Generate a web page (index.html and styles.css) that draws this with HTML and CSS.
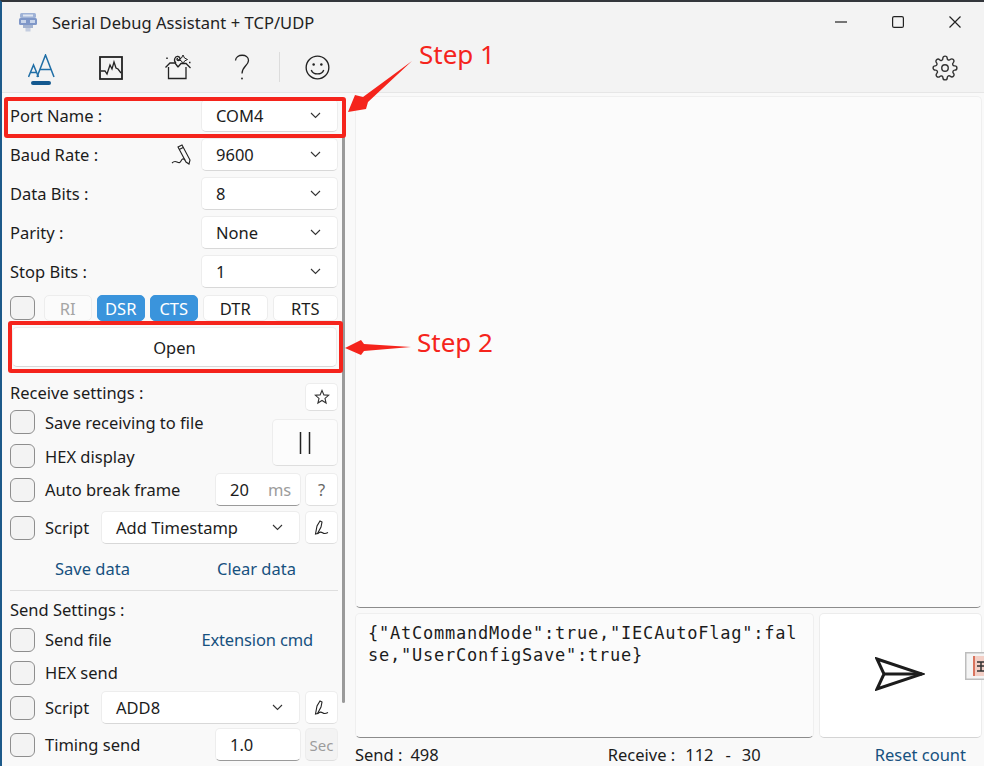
FILE: index.html
```html
<!DOCTYPE html>
<html lang="en">
<head>
<meta charset="utf-8">
<title>Serial Debug Assistant + TCP/UDP</title>
<link rel="stylesheet" href="styles.css">
</head>
<body>
<div class="window">
  <header class="titlebar">
    <svg class="app-icon" width="20" height="20" viewBox="0 0 20 20"><rect x="2" y="1" width="16" height="5" rx="1.5" fill="#9fb2d6"/><rect x="5" y="2.5" width="10" height="2" fill="#dfe6f2"/><rect x="1" y="6" width="18" height="7" rx="1.5" fill="#7f97c8"/><rect x="3" y="8" width="5" height="3" fill="#c9d5ea"/><rect x="12" y="8" width="5" height="3" fill="#c9d5ea"/><rect x="5" y="13" width="10" height="3" fill="#a3b2cf"/><rect x="7.5" y="16" width="5" height="3.5" fill="#c4cde0"/></svg>
    <span class="title">Serial Debug Assistant + TCP/UDP</span>
    <div class="win-controls">
      <svg class="wc-min" width="12" height="12" viewBox="0 0 12 12"><path d="M0 6h12" stroke="#222" stroke-width="1.2"/></svg>
      <svg class="wc-max" width="12" height="12" viewBox="0 0 12 12"><rect x=".6" y=".6" width="10.8" height="10.8" rx="1.5" fill="none" stroke="#222" stroke-width="1.2"/></svg>
      <svg class="wc-close" width="12" height="12" viewBox="0 0 12 12"><path d="M.5.5l11 11M11.500.5l-11 11" stroke="#222" stroke-width="1.2"/></svg>
    </div>
  </header>
  <nav class="toolbar">
    <svg class="tb-aa" width="28" height="32" viewBox="0 0 28 32" fill="none" stroke="#1f6ea6" stroke-width="1.5"><path d="M.5 23L5.500 11 10.500 23M2.300 18.500h6.500"/><path d="M9 23L17.500 1 26 23M12 15.500h11"/><rect x="3" y="27" width="20" height="4" rx="2" fill="#14598f" stroke="none"/></svg>
    <svg class="tb-chart" width="24" height="24" viewBox="0 0 24 24" fill="none" stroke="#222"><rect x="1" y="1" width="22" height="22" stroke-width="1.800"/><path d="M2 15h4l2 3 3-9 2 4 2-7 2 6 2 1 3 4" stroke-width="1.300"/></svg>
    <svg class="tb-gift" width="26" height="26" viewBox="0 0 26 26" fill="none" stroke="#222" stroke-width="1.300"><path d="M3.500 13v11.500h17.500V13"/><path d="M.5 13.500L5 9h5M13 13l-3-4M25.500 14L21 9.500h-5L13 13"/><path d="M11 9c-3-2.500-1-7 2-6.500s2.500 4 .5 4-2-2-.5-2"/><path d="M18 1l1.500 3L22.500 5.500 19.500 7 18 10l-1.500-3L13.500 5.500 16.500 4z" stroke-width="1"/><path d="M2 3.500v1.500M24 8.500h1.500" stroke-width="1.500"/></svg>
    <svg class="tb-help" width="16" height="26" viewBox="0 0 16 26" fill="none" stroke="#222" stroke-width="1.300"><path d="M1.500 6.500C2 -.5 14.500 -.5 14.500 6.500c0 5-6.500 6-6.500 13"/><circle cx="8" cy="24.500" r=".9" fill="#222" stroke="none"/></svg>
    <span class="tb-sep"></span>
    <svg class="tb-smile" width="25" height="25" viewBox="0 0 26 26" fill="none" stroke="#222" stroke-width="1.400"><circle cx="13" cy="13" r="11.800"/><circle cx="9" cy="10" r="1.300" fill="#222" stroke="none"/><circle cx="17" cy="10" r="1.300" fill="#222" stroke="none"/><path d="M6.500 15.500c2 5.500 11 5.500 13 0"/></svg>
    <svg class="tb-gear" width="26" height="26" viewBox="0 0 24 24" fill="none" stroke="#333" stroke-width="1.300" stroke-linecap="round" stroke-linejoin="round"><circle cx="12" cy="12" r="3"/><path d="M19.400 15a1.650 1.650 0 0 0 .33 1.820l.06.06a2 2 0 1 1-2.830 2.830l-.06-.06a1.650 1.650 0 0 0-2.800 1.170V21a2 2 0 1 1-4 0v-.09A1.650 1.650 0 0 0 7.300 19.740l-.06.06a2 2 0 1 1-2.830-2.830l.06-.06A1.650 1.650 0 0 0 3.300 14H3a2 2 0 1 1 0-4h.09A1.650 1.650 0 0 0 4.260 7.300l-.06-.06a2 2 0 1 1 2.830-2.830l.06.06A1.650 1.650 0 0 0 10 3.300V3a2 2 0 1 1 4 0v.09a1.650 1.650 0 0 0 2.800 1.170l.06-.06a2 2 0 1 1 2.830 2.830l-.06.06A1.650 1.650 0 0 0 20.700 10H21a2 2 0 1 1 0 4h-.09a1.650 1.650 0 0 0-1.510 1z"/></svg>
  </nav>
  <div class="content">
    <aside class="side">
      <div class="row r39"><span class="lbl">Port Name :</span><div class="select s-port"><span>COM4</span><svg class="chev" width="11" height="7" viewBox="0 0 11 7"><path d="M1 1l4.500 4.500L10 1" fill="none" stroke="#333" stroke-width="1.100"/></svg></div></div>
      <div class="row r39"><span class="lbl">Baud Rate :</span>
        <svg class="baud-pen" width="20" height="21" viewBox="0 0 20 21" fill="none" stroke="#222" stroke-width="1.100"><path d="M7 3l4-2 8 15-1 4-3-2z"/><path d="M8.200 5.500l4-2"/><path d="M1 19c2-2 3-2 5-1s3 1 4-1 2-3 4-1"/></svg>
        <div class="select s-port"><span>9600</span><svg class="chev" width="11" height="7" viewBox="0 0 11 7"><path d="M1 1l4.500 4.500L10 1" fill="none" stroke="#333" stroke-width="1.100"/></svg></div></div>
      <div class="row r39"><span class="lbl">Data Bits :</span><div class="select s-port"><span>8</span><svg class="chev" width="11" height="7" viewBox="0 0 11 7"><path d="M1 1l4.500 4.500L10 1" fill="none" stroke="#333" stroke-width="1.100"/></svg></div></div>
      <div class="row r39"><span class="lbl">Parity :</span><div class="select s-port"><span>None</span><svg class="chev" width="11" height="7" viewBox="0 0 11 7"><path d="M1 1l4.500 4.500L10 1" fill="none" stroke="#333" stroke-width="1.100"/></svg></div></div>
      <div class="row r39"><span class="lbl">Stop Bits :</span><div class="select s-port"><span>1</span><svg class="chev" width="11" height="7" viewBox="0 0 11 7"><path d="M1 1l4.500 4.500L10 1" fill="none" stroke="#333" stroke-width="1.100"/></svg></div></div>

      <div class="signals">
        <span class="check"></span>
        <span class="sig sig-s sig-off sig-first">RI</span>
        <span class="sig sig-s sig-on">DSR</span>
        <span class="sig sig-s sig-on">CTS</span>
        <span class="sig sig-l">DTR</span>
        <span class="sig sig-l">RTS</span>
      </div>
      <button class="open">Open</button>

      <div class="recv-top">
        <div class="recv-left">
          <div class="head">Receive settings :</div>
          <div class="row r34"><span class="check"></span><span class="ck-lbl">Save receiving to file</span></div>
          <div class="row r34"><span class="check"></span><span class="ck-lbl">HEX display</span></div>
        </div>
        <div class="recv-right">
          <button class="btn star-btn"><svg width="16" height="16" viewBox="0 0 16 16"><path d="M8 1.500l1.900 4.400 4.700.4-3.600 3.100 1.100 4.600L8 11.500 3.900 14l1.100-4.600-3.600-3.100 4.700-.4z" fill="none" stroke="#333" stroke-width="1.100"/></svg></button>
          <button class="btn pause-btn"><svg width="12" height="22" viewBox="0 0 12 22"><path d="M1.500 0v22M10.500 0v22" stroke="#222" stroke-width="1.500"/></svg></button>
        </div>
      </div>

      <div class="row r33"><span class="check"></span><span class="ck-lbl">Auto break frame</span>
        <div class="input i-push"><span class="i-val">20</span><span class="i-unit">ms</span></div>
        <button class="btn tool q">?</button></div>
      <div class="row r33 mt5"><span class="check"></span><span class="ck-lbl">Script</span>
        <div class="select s-script"><span>Add Timestamp</span><svg class="chev" width="11" height="7" viewBox="0 0 11 7"><path d="M1 1l4.500 4.500L10 1" fill="none" stroke="#333" stroke-width="1.100"/></svg></div>
        <button class="btn tool"><svg width="16" height="16" viewBox="0 0 16 16" fill="none" stroke="#222" stroke-width="1.100"><path d="M1.500 14L3 6l3-5 2 1-1 5-3.500 6.500z"/><path d="M3.500 14c2-3 4-2 5.500-1s3 .5 5-.5"/></svg></button></div>

      <div class="links"><span class="link link-save">Save data</span><span class="link link-clear">Clear data</span></div>
      <hr class="rule">
      <div class="head send-head">Send Settings :</div>
      <div class="row r33"><span class="check"></span><span class="ck-lbl">Send file</span><span class="link link-ext">Extension cmd</span></div>
      <div class="row r33"><span class="check"></span><span class="ck-lbl">HEX send</span></div>
      <div class="row r33 mt2"><span class="check"></span><span class="ck-lbl">Script</span>
        <div class="select s-script"><span>ADD8</span><svg class="chev" width="11" height="7" viewBox="0 0 11 7"><path d="M1 1l4.500 4.500L10 1" fill="none" stroke="#333" stroke-width="1.100"/></svg></div>
        <button class="btn tool"><svg width="16" height="16" viewBox="0 0 16 16" fill="none" stroke="#222" stroke-width="1.100"><path d="M1.500 14L3 6l3-5 2 1-1 5-3.500 6.500z"/><path d="M3.500 14c2-3 4-2 5.500-1s3 .5 5-.5"/></svg></button></div>
      <div class="row r33 mt4"><span class="check"></span><span class="ck-lbl">Timing send</span>
        <div class="input i-push"><span class="i-val">1.0</span></div>
        <button class="btn tool sec">Sec</button></div>
      <span class="scrollbar"></span>
    </aside>
    <main class="main">
      <section class="recv-box"></section>
      <section class="send-row">
        <div class="send-box">{"AtCommandMode":true,"IECAutoFlag":false,"UserConfigSave":true}</div>
        <button class="send-btn"><svg width="50" height="34" viewBox="0 0 50 34"><path d="M2 2l45 15L2 32l7-15z" fill="none" stroke="#1c1c1c" stroke-width="3" stroke-linejoin="miter"/><path d="M9 17h38" stroke="#1c1c1c" stroke-width="3"/></svg></button>
      </section>
      <footer class="status">
        <span class="st-send">Send :</span><span class="st-sval">498</span>
        <span class="st-recv">Receive :</span><span class="st-rval">112</span><span class="st-dash">-</span><span class="st-rval2">30</span>
        <span class="link st-reset">Reset count</span>
      </footer>
    </main>
  </div>

  <span class="mark mark-1"></span>
  <span class="mark mark-2"></span>
  <span class="step step-1">Step 1</span>
  <span class="step step-2">Step 2</span>
  <svg class="arrow arrow-1" width="70" height="56" viewBox="0 0 70 56"><path d="M68 4L19 40 11 38 4 55 22 52 24 45z" fill="#f5241c"/></svg>
  <svg class="arrow arrow-2" width="68" height="18" viewBox="0 0 68 18"><path d="M67 8L20 5 17 1 1 9 17 16 20 12z" fill="#f5241c"/></svg>
  <svg class="float-icon" width="20" height="28" viewBox="0 0 20 28"><rect x=".75" y=".75" width="19.500" height="26.500" fill="#f4f4f4" stroke="#bdbdbd" stroke-width="1.500"/><rect x="8" y="4" width="12" height="20" fill="#f3cfc6"/><rect x="8" y="4" width="2" height="20" fill="#d9745e"/><path d="M12 10h8M12 14h8M12 19h8M16 10v9" stroke="#333" stroke-width="1.500"/></svg>
</div>
</body>
</html>
```

FILE: styles.css
```css
* { box-sizing: border-box; }
html, body { margin: 0; padding: 0; height: 100%; overflow: hidden; background: #f3f3f3; }
body { font-family: "Noto Sans", "Open Sans", sans-serif; font-size: 16.5px; color: #1c1c1c; }
button { font: inherit; color: inherit; padding: 0; cursor: default; }

.window {
  position: relative;
  width: 984px; height: 766px;
  border-top: 2px solid #33363b;
  border-left: 2px solid #1d5a8a;
  background: #f3f3f3;
  display: flex; flex-direction: column;
  overflow: hidden;
}

.titlebar { height: 40px; display: flex; align-items: center; padding-left: 16px; flex: none; }
.app-icon { flex: none; }
.title { margin-left: 14px; font-size: 16.500px; color: #222; letter-spacing: .05px; }
.win-controls { margin-left: auto; display: flex; align-items: center; padding-right: 23px; }
.wc-min { margin-right: 45px; }
.wc-max { margin-right: 45px; }

.toolbar { height: 50px; flex: none; display: flex; align-items: center; }
.tb-aa { margin-left: 26px; margin-top: 6px; }
.tb-chart { margin-left: 43px; margin-top: 2px; }
.tb-gift { margin-left: 42px; }
.tb-help { margin-left: 43px; }
.tb-sep { width: 1px; height: 30px; background: #dcdcdc; margin-left: 29px; }
.tb-smile { margin-left: 25px; }
.tb-gear { margin-left: auto; margin-right: 26px; margin-top: 2px; }

.content { flex: 1; min-height: 0; display: flex; background: #f9f9f9; border-top: 1px solid #e6e6e6; }

.side { position: relative; width: 343px; flex: none; padding: 3px 7px 0 8px; }
.row { display: flex; align-items: center; }
.r39 { height: 39px; }
.r34 { height: 34px; }
.r33 { height: 33px; }
.mt2 { margin-top: 2px; }
.mt4 { margin-top: 4px; }
.mt5 { margin-top: 5px; }

.select {
  height: 33px; background: #fff;
  border: 1px solid #ededed; border-bottom-color: #d8d8d8; border-radius: 5px;
  display: flex; align-items: center; justify-content: space-between;
  padding: 0 16px 0 14px;
}
.s-port { width: 137px; margin-left: auto; }
.s-script { width: 199px; margin-left: auto; }
.baud-pen { margin-left: auto; }
.baud-pen + .s-port { margin-left: 10px; }

.check {
  width: 25px; height: 24px; flex: none;
  border: 1.500px solid #8e8e8e; border-radius: 6px; background: #f3f3f3;
}
.ck-lbl { margin-left: 10px; white-space: nowrap; }

.signals { display: flex; align-items: center; gap: 4.500px; margin-top: 4px; height: 26px; }
.sig {
  height: 26px; display: flex; align-items: center; justify-content: center;
  background: #fff; border: 1px solid #ededed; border-radius: 5px;
}
.sig-s { width: 48.500px; }
.sig-l { width: 65.500px; }
.sig-first { margin-left: 4px; }
.sig-off { color: #a5a5a5; background: #fbfbfb; }
.sig-on { background: #3a94dc; border-color: #3a94dc; color: #fff; }

.open {
  display: block; width: 325px; height: 40px; margin: 6px 0 0 2px;
  background: #fff; border: 1px solid #ededed; border-bottom-color: #d8d8d8; border-radius: 5px;
}

.recv-top { display: flex; justify-content: space-between; margin-top: 16px; height: 90px; }
.head { height: 22px; line-height: 20px; }
.recv-right { display: flex; flex-direction: column; align-items: flex-end; gap: 8px; }

.btn {
  background: #fff; border: 1px solid #ededed; border-bottom-color: #dedede; border-radius: 5px;
  display: flex; align-items: center; justify-content: center;
}
.star-btn { width: 33px; height: 28px; }
.pause-btn { width: 66px; height: 47px; background: #fcfcfc; }
.tool { width: 33px; height: 33px; margin-left: 5px; flex: none; }
.q { color: #666; margin-left: 4px; }
.sec { color: #9c9c9c; font-size: 15px; background: #f3f3f3; margin-left: 4px; }

.input {
  width: 86px; height: 33px; background: #fff; flex: none;
  border: 1px solid #ededed; border-bottom-color: #9a9a9a; border-radius: 5px;
  display: flex; align-items: center; padding-left: 14px;
}
.i-push { margin-left: auto; }
.i-unit { color: #9c9c9c; margin-left: 19px; }

.link { color: #17517f; white-space: nowrap; }
.links { display: flex; height: 24px; align-items: center; margin-top: 12px; }
.link-save { margin-left: 45px; }
.link-clear { margin-left: auto; margin-right: 42px; }
.rule { border: 0; height: 1px; background: #dedede; margin: 10px 0 0 0; }
.send-head { margin-top: 8px; height: 24px; line-height: 22px; }
.link-ext { margin-left: auto; margin-right: 25px; letter-spacing: -.15px; }

.scrollbar {
  position: absolute; left: 340px; top: 8px; width: 3px; height: 602px;
  background: #9a9a9a; border-radius: 2px;
}

.main { flex: 1; min-width: 0; display: flex; flex-direction: column; padding: 3px 2px 0 10px; }
.recv-box {
  flex: 1; min-height: 0; background: #fbfbfb;
  border: 1px solid #efefef; border-bottom-color: #8c8c8c; border-radius: 5px;
}
.send-row { display: flex; gap: 5px; height: 125px; margin-top: 5px; flex: none; }
.send-box {
  width: 459px; background: #fbfbfb;
  border: 1px solid #efefef; border-bottom-color: #8c8c8c; border-radius: 5px;
  padding: 8px 12px;
  font-family: "DejaVu Sans Mono", "Liberation Mono", monospace; font-size: 17px; line-height: 22px;
  letter-spacing: .77px; color: #1c1c1c;
  word-break: break-all;
}
.send-btn {
  flex: 1; background: #fff;
  border: 1px solid #ececec; border-bottom-color: #d4d4d4; border-radius: 5px;
  display: flex; align-items: center; justify-content: center;
  padding: 0 2px 4px 0;
}
.status { display: flex; align-items: center; height: 28px; flex: none; padding-top: 5px; }
.st-sval { margin-left: 8px; }
.st-recv { margin-left: 169px; }
.st-rval { margin-left: 10px; }
.st-dash { margin-left: 12px; }
.st-rval2 { margin-left: 11px; }
.st-reset { margin-left: auto; margin-right: 16px; }

.mark { position: absolute; border: 4px solid #f5241c; border-radius: 3px; pointer-events: none; }
.mark-1 { left: 2px; top: 95px; width: 342px; height: 41px; }
.mark-2 { left: 6px; top: 319px; width: 335px; height: 52px; }
.step { position: absolute; color: #f5241c; font-size: 26px; line-height: 30px; white-space: nowrap; }
.step-1 { left: 417px; top: 37px; }
.step-2 { left: 415px; top: 325px; }
.arrow { position: absolute; }
.arrow-1 { left: 342px; top: 55px; }
.arrow-2 { left: 342px; top: 337px; }
.float-icon { position: absolute; left: 963px; top: 650px; }
```
